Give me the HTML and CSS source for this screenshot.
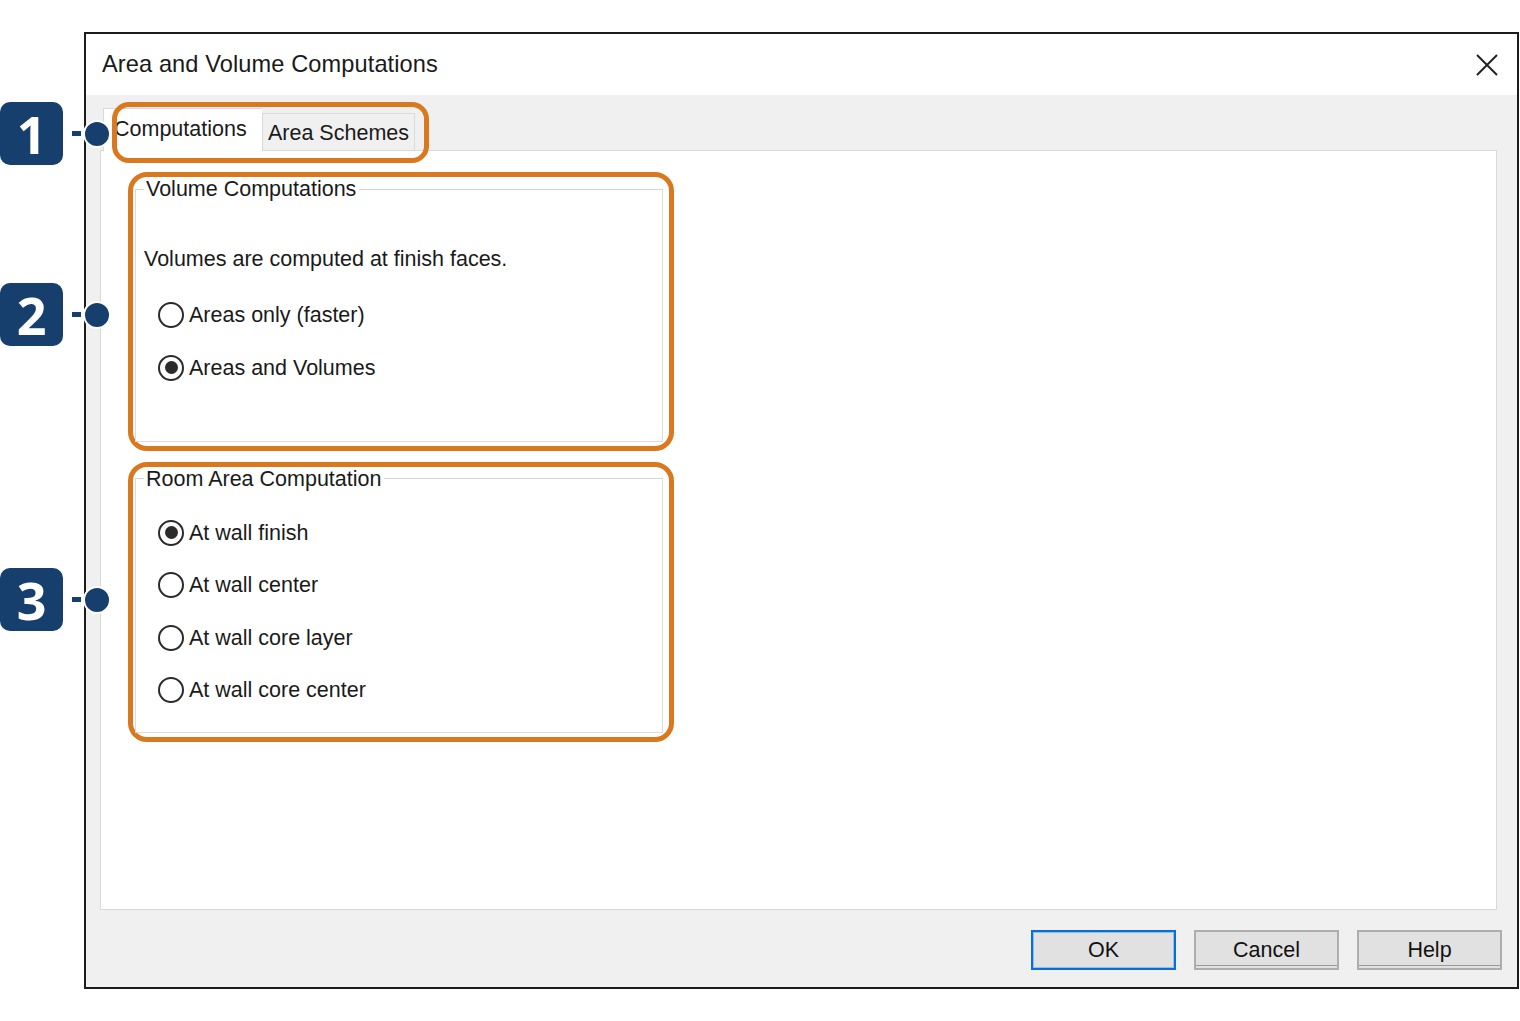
FILE: index.html
```html
<!DOCTYPE html>
<html>
<head>
<meta charset="utf-8">
<link rel="stylesheet" href="styles.css">
</head>
<body>
<div class="stage">
  <div class="dialog">
    <div class="titlebar">
      <span class="title">Area and Volume Computations</span>
      <svg class="close" width="24" height="24" viewBox="0 0 24 24"><path d="M2 2 L22 22 M22 2 L2 22" stroke="#222" stroke-width="2" fill="none"/></svg>
    </div>
    <div class="body">
      <div class="tabstrip">
        <div class="tab active">Computations</div>
        <div class="tab">Area Schemes</div>
      </div>
      <div class="panel">
        <div class="hl">
          <fieldset class="group g1">
            <legend>Volume Computations</legend>
            <div class="note">Volumes are computed at finish faces.</div>
            <div class="radio"><span class="dot"></span>Areas only (faster)</div>
            <div class="radio"><span class="dot on"></span>Areas and Volumes</div>
          </fieldset>
        </div>
        <div class="hl">
          <fieldset class="group g2">
            <legend>Room Area Computation</legend>
            <div class="radio"><span class="dot on"></span>At wall finish</div>
            <div class="radio"><span class="dot"></span>At wall center</div>
            <div class="radio"><span class="dot"></span>At wall core layer</div>
            <div class="radio"><span class="dot"></span>At wall core center</div>
          </fieldset>
        </div>
      </div>
      <div class="buttons">
        <div class="btn default">OK</div>
        <div class="btn">Cancel</div>
        <div class="btn">Help</div>
      </div>
    </div>
  </div>

  <div class="tabs-hl"></div>

  <div class="callout c1"><div class="badge">1</div><div class="dash"></div><div class="pin"></div></div>
  <div class="callout c2"><div class="badge">2</div><div class="dash"></div><div class="pin"></div></div>
  <div class="callout c3"><div class="badge">3</div><div class="dash"></div><div class="pin"></div></div>
</div>
</body>
</html>
```

FILE: styles.css
```css
html, body {
  margin: 0;
  padding: 0;
  background: #ffffff;
}

body {
  font-family: "Liberation Sans", Arial, sans-serif;
  color: #1a1a1a;
}

.stage {
  position: relative;
  width: 1520px;
  height: 1021px;
  padding: 32px 0 0 84px;
  box-sizing: border-box;
}

.dialog {
  width: 1435px;
  height: 957px;
  border: 2px solid #1c1c1c;
  box-sizing: border-box;
  background: #f0f0f0;
  display: flex;
  flex-direction: column;
}

.titlebar {
  height: 61px;
  background: #ffffff;
  display: flex;
  align-items: center;
  justify-content: space-between;
  padding: 0 18px 0 16px;
  flex: none;
}

.title {
  font-size: 23.6px;
  color: #1a1a1a;
  letter-spacing: 0.1px;
}

.close {
  display: block;
}

.body {
  flex: 1;
  display: flex;
  flex-direction: column;
  padding: 0 20px 17px 14px;
}

.tabstrip {
  height: 55px;
  display: flex;
  align-items: flex-end;
  padding-left: 3px;
  flex: none;
  position: relative;
  z-index: 1;
}

.tab {
  font-size: 21.5px;
  box-sizing: border-box;
  border: 1px solid #d9d9d9;
  border-bottom: none;
  background: #f0f0f0;
  height: 37px;
  width: 153px;
  display: flex;
  align-items: center;
  justify-content: center;
  padding-top: 2px;
}

.tab.active {
  background: #ffffff;
  height: 43px;
  width: 159px;
  margin-bottom: -1px;
  justify-content: flex-start;
  padding: 0 0 1px 10px;
  border-right: none;
}

.panel {
  height: 760px;
  box-sizing: border-box;
  border: 1px solid #d9d9d9;
  background: #ffffff;
  padding: 21px 0 0 27px;
  flex: none;
}

.hl {
  width: 546px;
  box-sizing: border-box;
  border: 5px solid #d9781e;
  border-radius: 19px;
  padding: 0 6px 4px 2px;
  margin-bottom: 11px;
}

.group {
  margin: 0;
  border: 1px solid #dcdcdc;
  border-top-color: #d4d4d4;
  padding: 0 8px 0 8px;
  font-size: 21.5px;
}

.group legend {
  padding: 0 3px 0 2px;
  height: 24px;
  line-height: 24px;
  color: #1a1a1a;
}

.g1 {
  padding-bottom: 60px;
}

.g2 {
  padding-bottom: 29px;
}

.note {
  height: 26px;
  line-height: 26px;
  margin-top: 45px;
  margin-bottom: 30px;
}

.radio {
  height: 26px;
  line-height: 26px;
  display: flex;
  align-items: center;
  margin-left: 14px;
  margin-bottom: 26.5px;
}

.g2 .radio {
  margin-bottom: 26.5px;
}

.g1 .radio:last-child,
.g2 .radio:last-child {
  margin-bottom: 0;
}

.g2 .radio:first-of-type {
  margin-top: 29px;
}

.dot {
  width: 26px;
  height: 26px;
  box-sizing: border-box;
  border: 2px solid #2b2b2b;
  border-radius: 50%;
  background: #ffffff;
  margin-right: 5px;
  display: flex;
  align-items: center;
  justify-content: center;
  flex: none;
}

.dot.on::after {
  content: "";
  width: 13px;
  height: 13px;
  border-radius: 50%;
  background: #2b2b2b;
}

.buttons {
  margin-top: 20px;
  display: flex;
  justify-content: flex-end;
  gap: 18px;
  margin-right: -5px;
}

.btn {
  width: 145px;
  height: 40px;
  box-sizing: border-box;
  border: 2px solid #adadad;
  background: #e1e1e1;
  font-size: 21.5px;
  display: flex;
  align-items: center;
  justify-content: center;
  color: #111;
  box-shadow: inset 0 -2px 0 #e1e1e1, inset 0 -3px 0 #9a9a9a;
}

.btn.default {
  border-color: #0a6fd0;
  box-shadow: inset 0 0 0 1px #8cc0ee;
}

/* annotation overlays */
.tabs-hl {
  position: absolute;
  left: 112px;
  top: 102px;
  width: 317px;
  height: 61px;
  box-sizing: border-box;
  border: 5px solid #d9781e;
  border-radius: 17px;
  z-index: 5;
}

.callout {
  position: absolute;
  left: 0;
  height: 63px;
  display: flex;
  align-items: center;
  z-index: 6;
}

.c1 { top: 102px; }
.c2 { top: 283px; }
.c3 { top: 568px; }

.badge {
  width: 63px;
  height: 63px;
  border-radius: 10px;
  background: #173f6d;
  color: #ffffff;
  font-family: "Open Sans", "DejaVu Sans", sans-serif;
  font-weight: 700;
  font-size: 52px;
  line-height: 63px;
  text-align: center;
}

.dash {
  width: 9px;
  height: 5px;
  background: #173f6d;
  margin-left: 9px;
}

.pin {
  width: 24px;
  height: 24px;
  border-radius: 50%;
  background: #173f6d;
  border: 2px solid #ffffff;
  margin-left: 2px;
}
```
